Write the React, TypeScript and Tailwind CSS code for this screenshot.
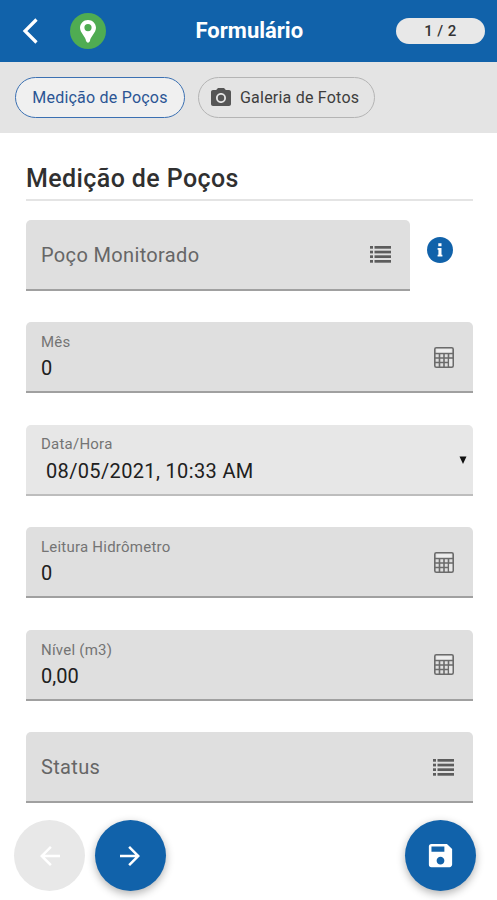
import type { ReactNode } from 'react';
import { MdArrowBack, MdArrowForward, MdCameraAlt, MdSave } from 'react-icons/md';

function ListIcon() {
  return (
    <svg width="21" height="17" viewBox="0 0 21 17" fill="#5c5c5c" className="block">
      {[0, 4.7, 9.3, 14].map((y) => (
        <g key={y}>
          <rect x="0" y={y} width="3" height="2.7" />
          <rect x="4.5" y={y} width="16.5" height="2.7" />
        </g>
      ))}
    </svg>
  );
}

function InfoIcon() {
  return (
    <svg width="26" height="26" viewBox="0 0 26 26" className="mt-[17px] ml-[17px] block">
      <circle cx="13" cy="13" r="13" fill="#1162aa" />
      <path d="M11.3 6.2H14.5V9.2H11.3ZM10.6 11H14.5V17.8H15.4V19.6H10.6V17.8H11.4V12.8H10.6Z" fill="#fff" />
    </svg>
  );
}

function CalculatorIcon() {
  return (
    <svg width="20" height="21" viewBox="0 0 20 21" fill="none" stroke="#6b6b6b" strokeWidth="1.6" className="block">
      <rect x="0.8" y="0.8" width="18.4" height="19.4" rx="1.5" />
      <path d="M1 6.5H19M1 11H19M1 15.5H14.5M5.5 6.5V20M10 6.5V20M14.5 6.5V20" />
      <rect x="2.5" y="2.3" width="15" height="3" fill="#eee" stroke="none" />
      <rect x="15.2" y="12" width="3" height="7" fill="#e8e8e8" stroke="none" />
    </svg>
  );
}

type FieldProps = {
  label: string;
  value?: string;
  icon: ReactNode;
  light?: boolean;
  className?: string;
};

function Field({ label, value, icon, light, className = 'w-[447px]' }: FieldProps) {
  return (
    <div
      className={`flex h-[71px] shrink-0 items-center justify-between rounded-t-[5px] border-b-2 pt-px pl-[15px] whitespace-nowrap ${
        light ? 'border-[#bdbdbd] bg-[#e7e7e7] pr-[6px]' : 'border-[#a0a0a0] bg-[#dfdfdf] pr-[19px]'
      } ${className}`}
    >
      {value === undefined ? (
        <span className="text-[20px] leading-6 tracking-[0.35px] text-[#666]">{label}</span>
      ) : (
        <div className="flex flex-col">
          <span className="text-[15px] leading-[20px] tracking-[0.23px] text-[#747474]">{label}</span>
          <span
            className={`text-[20px] text-[#202020] ${
              light ? 'mt-[4px] pl-[5px] leading-[27px] tracking-[0.35px]' : 'mt-[2px] leading-7'
            }`}
          >
            {value}
          </span>
        </div>
      )}
      {icon}
    </div>
  );
}

export default function App() {
  return (
    <div className="flex h-[900px] w-[497px] flex-col overflow-hidden bg-white font-['Roboto',sans-serif]">
      <header className="flex h-[62px] shrink-0 items-center bg-[#1162aa] pr-[12px] pl-[22px]">
        <svg width="16" height="26" viewBox="0 0 16 26" fill="none" stroke="white" strokeWidth="3.2">
          <path d="M14.5 1.5L3 13L14.5 24.5" />
        </svg>
        <div className="ml-[32px] flex size-[36px] items-center justify-center rounded-full bg-[#4fac52]">
          <svg width="16" height="23" viewBox="0 0 16 23" fill="white">
            <path fillRule="evenodd" d="M8 0C3.6 0 0 3.5 0 7.8C0 12.8 6 17.2 6 21Q8 24.5 10 21C10 17.2 16 12.8 16 7.8C16 3.5 12.4 0 8 0ZM8 4A3.6 3.6 0 1 1 8 11.2A3.6 3.6 0 1 1 8 4Z" />
          </svg>
        </div>
        <h1 className="flex-1 pl-[89.5px] text-[22px] leading-7 font-bold text-white">Formulário</h1>
        <span className="flex h-[26px] w-[89px] items-center justify-center rounded-full bg-[#e8e8e8] text-[15px] font-medium tracking-[0.4px] text-[#333]">
          1 / 2
        </span>
      </header>

      <nav className="flex h-[71px] shrink-0 items-center gap-[13px] bg-[#e4e4e4] pl-[15px] text-[16px] whitespace-nowrap">
        <button className="flex h-[41px] w-[170px] items-center justify-center rounded-full border border-[#3b70b2] bg-[#f0f0f0] tracking-[0.22px] text-[#2b5594]">
          Medição de Poços
        </button>
        <button className="flex h-[41px] w-[177px] items-center rounded-full border border-[#b4b4b4] pl-[10px] tracking-[0.22px] text-[#3d3d3d]">
          <MdCameraAlt size={24} color="#555" className="mr-[7px]" />
          Galeria de Fotos
        </button>
      </nav>

      <main className="flex h-[767px] shrink-0 flex-col pt-[27px] pl-[26px]">
        <h2 className="h-[41px] w-[447px] border-b-2 border-[#e4e4e4] text-[25px] leading-[38px] font-medium tracking-[0.4px] text-[#303030]">
          Medição de Poços
        </h2>

        <div className="mt-[18.5px] flex flex-col gap-[31.5px]">
          <div className="flex">
            <Field label="Poço Monitorado" icon={<ListIcon />} className="w-[384px]" />
            <InfoIcon />
          </div>
          <Field label="Mês" value="0" icon={<CalculatorIcon />} />
          <Field
            label="Data/Hora"
            value="08/05/2021, 10:33 AM"
            light
            icon={
              <svg width="8" height="8" viewBox="0 0 8 8" fill="#111">
                <path d="M0.5 0.5H7.5L4 8Z" />
              </svg>
            }
          />
          <Field label="Leitura Hidrômetro" value="0" icon={<CalculatorIcon />} />
          <Field label="Nível (m3)" value="0,00" icon={<CalculatorIcon />} />
          <Field label="Status" icon={<ListIcon />} />
        </div>

        <footer className="mt-[17px] -ml-[12px] flex w-[462px] shrink-0 text-white">
          <button className="flex size-[71px] items-center justify-center rounded-full bg-[#e8e8e8]">
            <MdArrowBack size={30} />
          </button>
          <button className="ml-[9.5px] flex size-[71px] items-center justify-center rounded-full bg-[#1162aa] shadow-[0_3px_9px_rgba(0,0,0,0.3)]">
            <MdArrowForward size={30} />
          </button>
          <button className="ml-auto flex size-[71px] items-center justify-center rounded-full bg-[#1162aa] shadow-[0_3px_9px_rgba(0,0,0,0.3)]">
            <MdSave size={31} />
          </button>
        </footer>
      </main>
    </div>
  );
}
